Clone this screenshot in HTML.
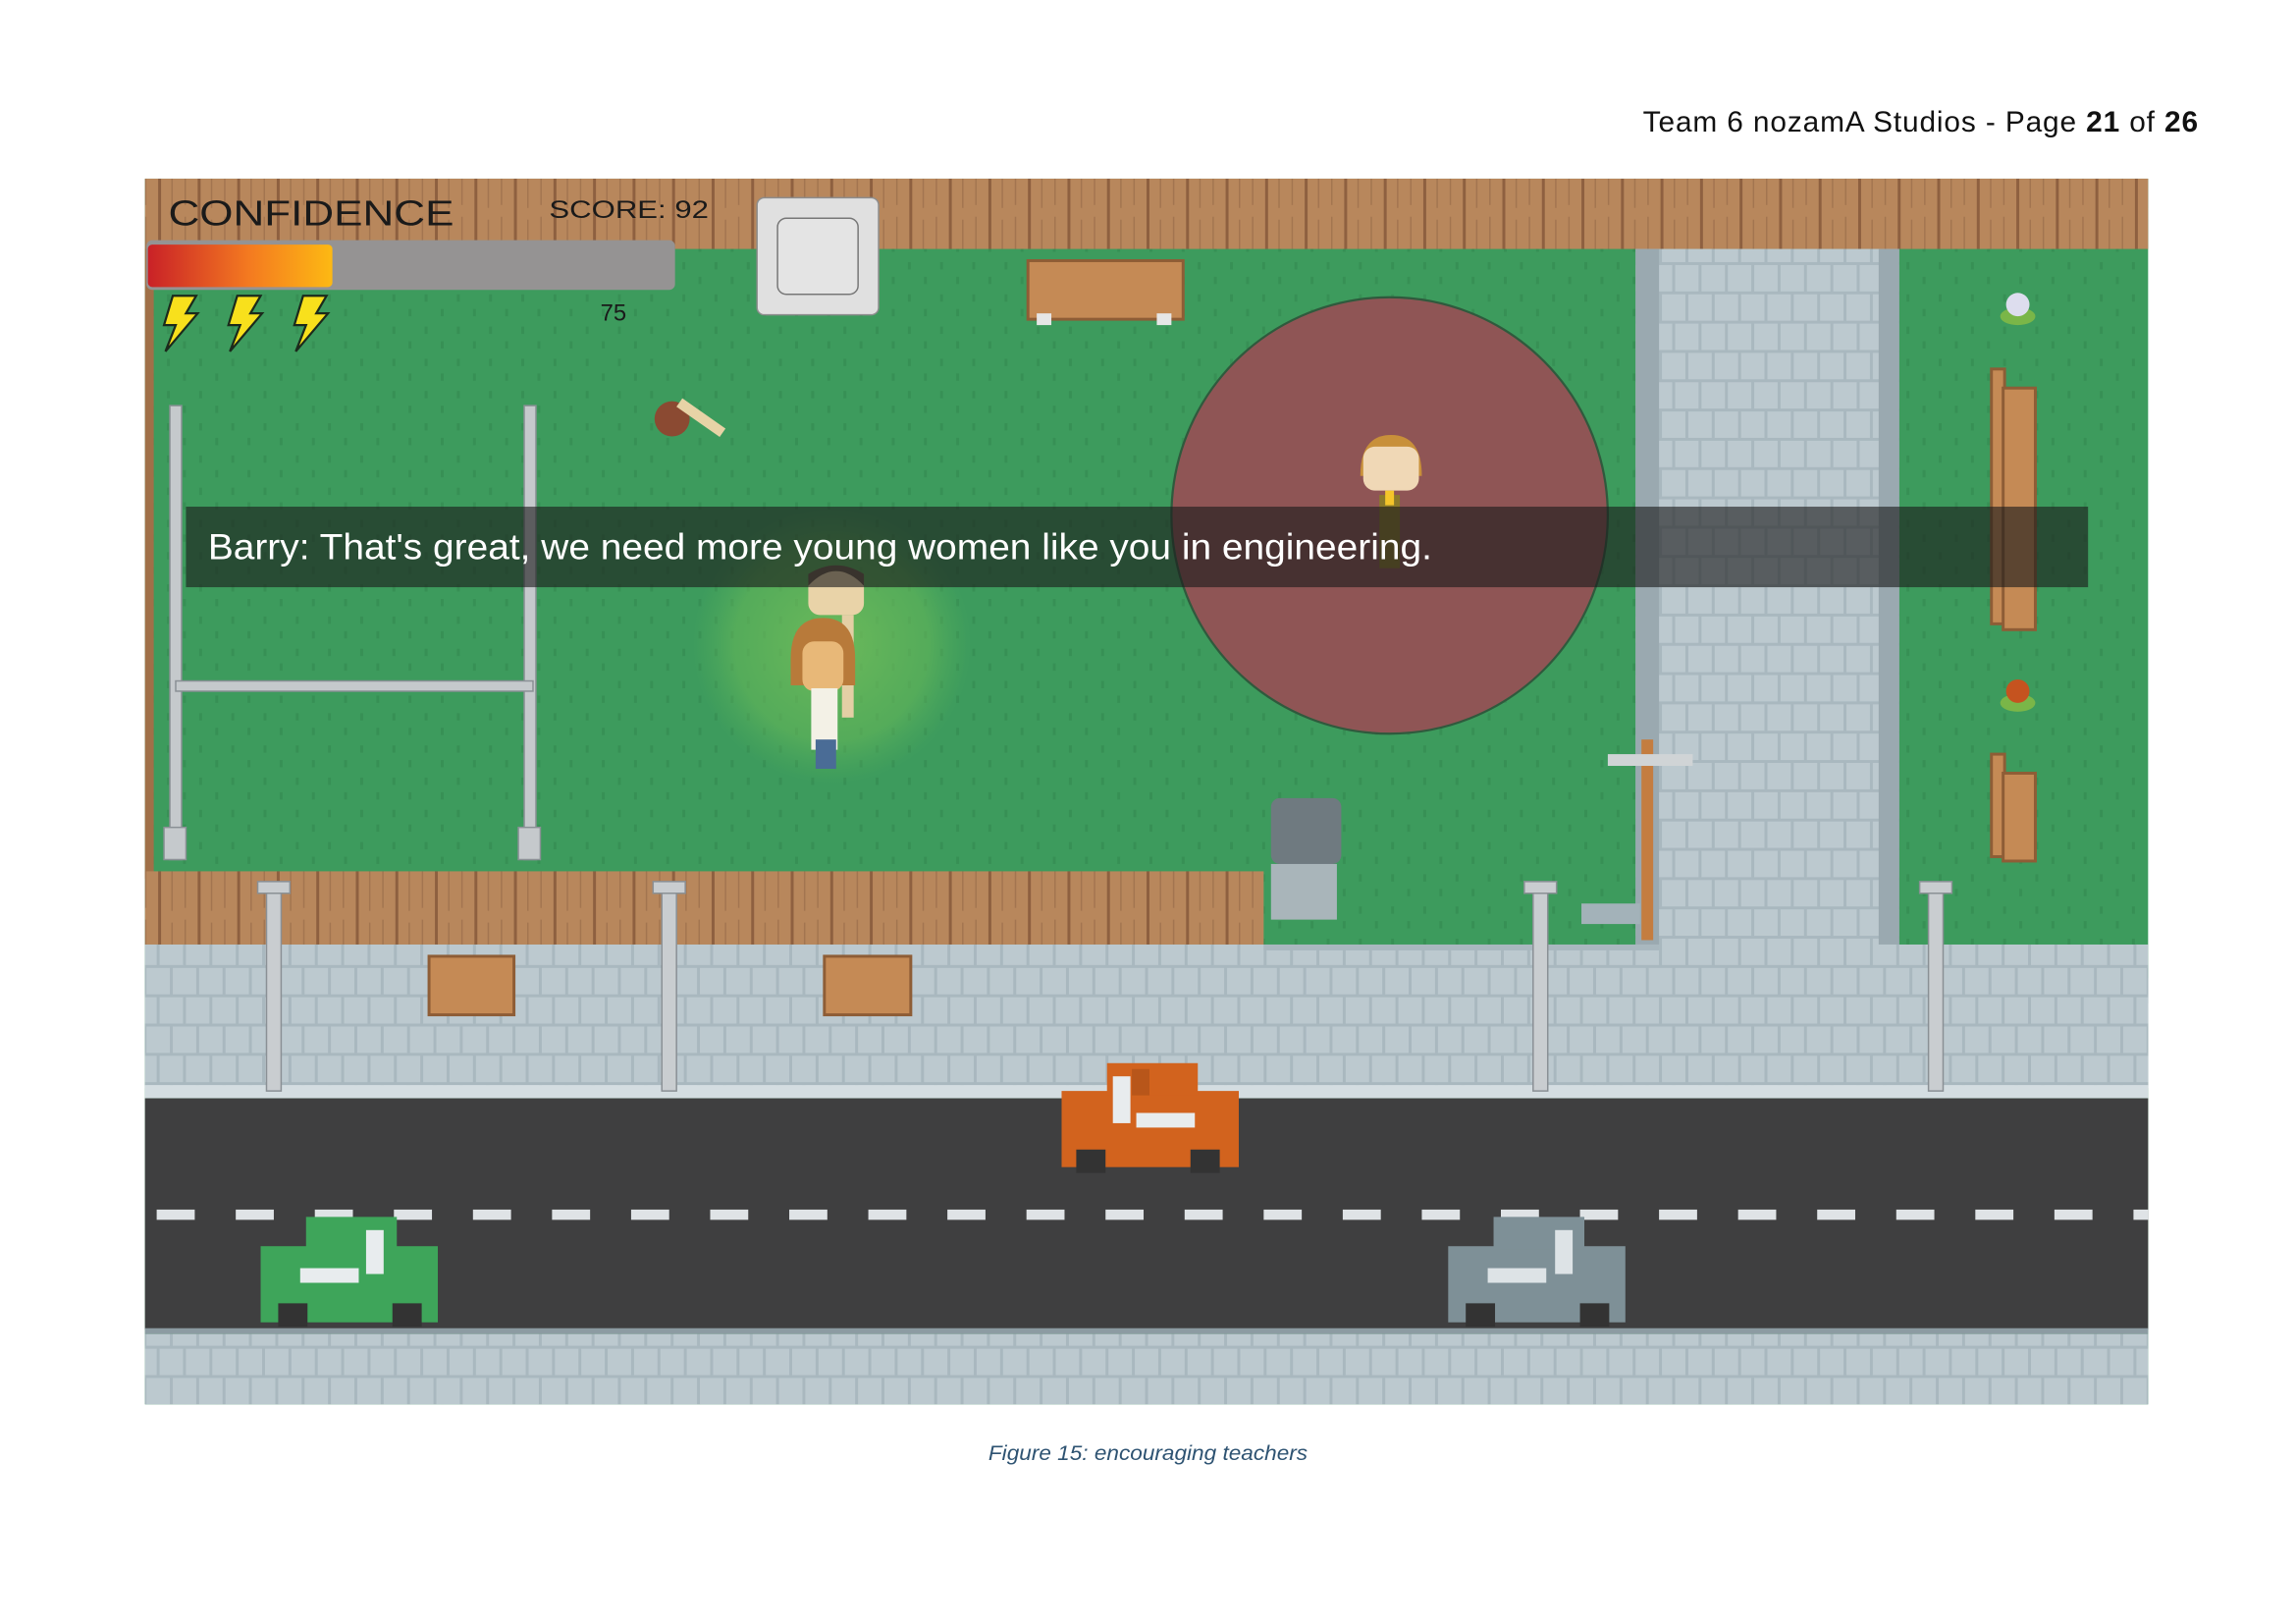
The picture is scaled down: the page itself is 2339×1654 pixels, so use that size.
<!DOCTYPE html>
<html><head><meta charset="utf-8"><style>
html,body{margin:0;padding:0;background:#fff;width:2339px;height:1654px;overflow:hidden}
svg{display:block}
</style></head><body>
<svg width="2339" height="1654" viewBox="0 0 1568 1109" preserveAspectRatio="none" xmlns="http://www.w3.org/2000/svg">
<defs>
<pattern id="fence" width="27" height="48" patternUnits="userSpaceOnUse">
<rect width="27" height="48" fill="#b8875c"/>
<rect x="0" width="2" height="48" fill="#8e6040"/>
<rect x="9" y="6" width="1" height="40" fill="#a37550"/>
<rect x="18" y="4" width="1" height="40" fill="#a37550"/>
</pattern>
<pattern id="tile" width="36" height="40" patternUnits="userSpaceOnUse">
<rect width="36" height="40" fill="#a9b8bf"/>
<rect x="1" y="1" width="16" height="18" fill="#bcc9cf"/>
<rect x="19" y="1" width="16" height="18" fill="#bcc9cf"/>
<rect x="10" y="21" width="16" height="18" fill="#bcc9cf"/>
<rect x="-8" y="21" width="16" height="18" fill="#bcc9cf"/>
<rect x="28" y="21" width="16" height="18" fill="#bcc9cf"/>
</pattern>
<pattern id="grass" width="22" height="22" patternUnits="userSpaceOnUse">
<rect width="22" height="22" fill="#3d9b5d"/>
<rect x="4" y="3" width="2" height="5" fill="#379055"/>
<rect x="15" y="13" width="2" height="5" fill="#379055"/>
</pattern>
<linearGradient id="conf" x1="0" x2="1"><stop offset="0" stop-color="#c92127"/><stop offset="0.55" stop-color="#f47a20"/><stop offset="1" stop-color="#fdb913"/></linearGradient>
<radialGradient id="glow"><stop offset="0" stop-color="#7cc45a" stop-opacity=".75"/><stop offset="0.7" stop-color="#6cbc58" stop-opacity=".5"/><stop offset="1" stop-color="#5ab458" stop-opacity="0"/></radialGradient>
</defs>

<text x="1501" y="90" text-anchor="end" font-family="Liberation Sans, sans-serif" font-size="20" fill="#111" textLength="379" lengthAdjust="spacing">Team 6 nozamA Studios - Page <tspan font-weight="bold">21</tspan> of <tspan font-weight="bold">26</tspan></text>

<rect x="99" y="122" width="1368" height="837" fill="url(#grass)"/>
<rect x="99" y="122" width="1368" height="48" fill="url(#fence)"/>
<rect x="99" y="170" width="6" height="430" fill="#a07048"/>
<rect x="1117" y="170" width="180" height="480" fill="url(#tile)"/>
<rect x="1117" y="170" width="16" height="480" fill="#9aa9b0"/>
<rect x="1283" y="170" width="14" height="510" fill="#9aa9b0"/>
<rect x="1297" y="668" width="170" height="20" fill="#a3b2b9"/>
<rect x="99" y="595" width="764" height="50" fill="url(#fence)"/>
<rect x="99" y="645" width="1368" height="98" fill="url(#tile)"/>
<rect x="1297" y="685" width="170" height="58" fill="url(#tile)"/>
<rect x="863" y="645" width="270" height="4" fill="#a9b8bf"/>
<rect x="99" y="741" width="1368" height="9" fill="#d4dde1"/>
<rect x="99" y="750" width="1368" height="158" fill="#3f3f40"/>
<g fill="#dfe3e6">
<rect x="107" y="826" width="26" height="7"/><rect x="161" y="826" width="26" height="7"/><rect x="215" y="826" width="26" height="7"/><rect x="269" y="826" width="26" height="7"/><rect x="323" y="826" width="26" height="7"/><rect x="377" y="826" width="26" height="7"/><rect x="431" y="826" width="26" height="7"/><rect x="485" y="826" width="26" height="7"/><rect x="539" y="826" width="26" height="7"/><rect x="593" y="826" width="26" height="7"/><rect x="647" y="826" width="26" height="7"/><rect x="701" y="826" width="26" height="7"/><rect x="755" y="826" width="26" height="7"/><rect x="809" y="826" width="26" height="7"/><rect x="863" y="826" width="26" height="7"/><rect x="917" y="826" width="26" height="7"/><rect x="971" y="826" width="26" height="7"/><rect x="1025" y="826" width="26" height="7"/><rect x="1079" y="826" width="26" height="7"/><rect x="1133" y="826" width="26" height="7"/><rect x="1187" y="826" width="26" height="7"/><rect x="1241" y="826" width="26" height="7"/><rect x="1295" y="826" width="26" height="7"/><rect x="1349" y="826" width="26" height="7"/><rect x="1403" y="826" width="26" height="7"/><rect x="1457" y="826" width="10" height="7"/>
</g>
<rect x="99" y="907" width="1368" height="4" fill="#8c9ba2"/>
<rect x="99" y="911" width="1368" height="48" fill="url(#tile)"/>

<g>
<rect x="725" y="745" width="121" height="52" fill="#d2631e"/><rect x="756" y="726" width="62" height="22" fill="#d2631e"/>
<rect x="773" y="730" width="12" height="18" fill="#b8561a"/>
<rect x="760" y="735" width="12" height="32" fill="#e8ecee"/><rect x="776" y="760" width="40" height="10" fill="#e8ecee"/>
<rect x="735" y="785" width="20" height="16" fill="#333"/><rect x="813" y="785" width="20" height="16" fill="#333"/>
</g>
<g>
<rect x="178" y="851" width="121" height="52" fill="#3ea55a"/><rect x="209" y="831" width="62" height="22" fill="#3ea55a"/>
<rect x="250" y="840" width="12" height="30" fill="#e8ecee"/><rect x="205" y="866" width="40" height="10" fill="#e8ecee"/>
<rect x="190" y="890" width="20" height="16" fill="#333"/><rect x="268" y="890" width="20" height="16" fill="#333"/>
</g>
<g>
<rect x="989" y="851" width="121" height="52" fill="#7e9097"/><rect x="1020" y="831" width="62" height="22" fill="#7e9097"/>
<rect x="1062" y="840" width="12" height="30" fill="#dde3e6"/><rect x="1016" y="866" width="40" height="10" fill="#dde3e6"/>
<rect x="1001" y="890" width="20" height="16" fill="#333"/><rect x="1079" y="890" width="20" height="16" fill="#333"/>
</g>

<g fill="#c9cdd0" stroke="#8a9095" stroke-width="1">
<rect x="182" y="605" width="10" height="140"/><rect x="176" y="602" width="22" height="8"/>
<rect x="452" y="605" width="10" height="140"/><rect x="446" y="602" width="22" height="8"/>
<rect x="1047" y="605" width="10" height="140"/><rect x="1041" y="602" width="22" height="8"/>
<rect x="1317" y="605" width="10" height="140"/><rect x="1311" y="602" width="22" height="8"/>
</g>
<g fill="#c5c9cc" stroke="#8a9095" stroke-width="1">
<rect x="116" y="277" width="8" height="310"/><rect x="358" y="277" width="8" height="310"/>
<rect x="120" y="465" width="244" height="7"/>
<rect x="112" y="565" width="15" height="22"/><rect x="354" y="565" width="15" height="22"/>
</g>
<g fill="#c58a55" stroke="#8e5d36" stroke-width="2">
<rect x="702" y="178" width="106" height="40"/>
<rect x="293" y="653" width="58" height="40"/><rect x="563" y="653" width="59" height="40"/>
<rect x="1360" y="252" width="9" height="174"/><rect x="1368" y="265" width="22" height="165"/>
<rect x="1360" y="515" width="9" height="70"/><rect x="1368" y="528" width="22" height="60"/>
</g>
<g fill="#e6e6e6"><rect x="708" y="214" width="10" height="8"/><rect x="790" y="214" width="10" height="8"/></g>
<rect x="1121" y="505" width="8" height="137" fill="#c47d40"/>
<rect x="1098" y="515" width="58" height="8" fill="#d0d4d6"/>
<rect x="1080" y="617" width="40" height="14" fill="#a3b2b9"/>
<rect x="868" y="545" width="48" height="45" rx="6" fill="#6f7a80"/>
<rect x="868" y="590" width="45" height="38" fill="#a9b5ba"/>
<ellipse cx="1378" cy="216" rx="12" ry="6" fill="#7ab648"/><circle cx="1378" cy="208" r="8" fill="#dde"/>
<ellipse cx="1378" cy="480" rx="12" ry="6" fill="#7ab648"/><circle cx="1378" cy="472" r="8" fill="#c5531f"/>
<circle cx="459" cy="286" r="12" fill="#8b4a32"/><rect x="466" y="272" width="36" height="7" transform="rotate(35 466 272)" fill="#e7d3a6"/>

<circle cx="568" cy="440" r="95" fill="url(#glow)"/>
<circle cx="949" cy="352" r="149" fill="#8f5555" stroke="#2f5a3d" stroke-width="1.5"/>

<g>
<rect x="552" y="390" width="38" height="30" rx="8" fill="#e9d3a8"/>
<path d="M552 400 q19 -20 38 0 v-8 q-19 -12 -38 0z" fill="#6b5b4a"/>
<rect x="575" y="420" width="8" height="70" fill="#e4cfa5"/>
<path d="M540 450 q0 -28 22 -28 q22 0 22 28 v18 h-44z" fill="#b87a3a"/>
<rect x="548" y="438" width="28" height="34" rx="8" fill="#e8b878"/>
<rect x="554" y="470" width="18" height="42" fill="#f3f1e6"/>
<rect x="557" y="505" width="14" height="20" fill="#4a6c96"/>
</g>
<g>
<path d="M929 325 q0 -28 21 -28 q21 0 21 28 z" fill="#c8903a"/>
<rect x="931" y="305" width="38" height="30" rx="8" fill="#f0d8b6"/>
<rect x="942" y="338" width="14" height="50" fill="#8c7a2a"/>
<rect x="946" y="335" width="6" height="10" fill="#f5c52a"/>
</g>

<rect x="127" y="346" width="1299" height="55" fill="#1c1c1c" fill-opacity=".62"/>
<text x="142" y="382" font-family="Liberation Sans, sans-serif" font-size="25" fill="#fff" textLength="836" lengthAdjust="spacingAndGlyphs">Barry: That's great, we need more young women like you in engineering.</text>

<text x="115" y="154" font-family="Liberation Sans, sans-serif" font-size="24" fill="#1a1a1a" textLength="195" lengthAdjust="spacingAndGlyphs">CONFIDENCE</text>
<text x="375" y="149" font-family="Liberation Sans, sans-serif" font-size="17" fill="#1a1a1a" textLength="109" lengthAdjust="spacingAndGlyphs">SCORE: 92</text>
<rect x="100" y="164" width="361" height="34" rx="4" fill="#959393"/>
<rect x="101" y="167" width="126" height="29" rx="3" fill="url(#conf)"/>
<text x="410" y="219" font-family="Liberation Sans, sans-serif" font-size="16" fill="#1a1a1a">75</text>
<g fill="#f8e01c" stroke="#1b2a1c" stroke-width="1.5">
<path d="M118 202 h16 l-7 12 h8 l-22 26 l7 -18 h-8z"/>
<path d="M162 202 h16 l-7 12 h8 l-22 26 l7 -18 h-8z"/>
<path d="M207 202 h16 l-7 12 h8 l-22 26 l7 -18 h-8z"/>
</g>
<rect x="517" y="135" width="83" height="80" rx="5" fill="#e0e0e0" stroke="#8d8d8d" stroke-width="1"/>
<rect x="531" y="149" width="55" height="52" rx="6" fill="#e4e4e4" stroke="#777" stroke-width="1"/>

<text x="784" y="997" text-anchor="middle" font-family="Liberation Sans, sans-serif" font-style="italic" font-size="14" fill="#2e5372" textLength="218" lengthAdjust="spacingAndGlyphs">Figure 15: encouraging teachers</text>
</svg>
</body></html>
